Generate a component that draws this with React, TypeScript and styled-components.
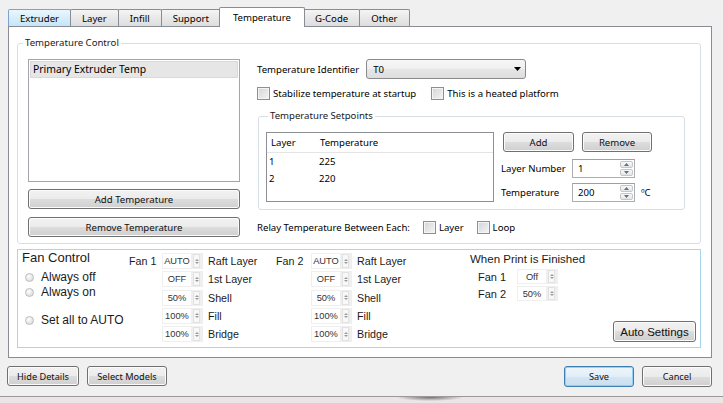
import { Fragment } from "react";
import styled, { createGlobalStyle } from "styled-components";

const GlobalStyle = createGlobalStyle`
  html, body {
    margin: 0;
    padding: 0;
    background: #f0f0f0;
  }
  * {
    box-sizing: border-box;
  }
`;

const uiFont = `"Noto Sans", "Open Sans", sans-serif`;
const arialFont = `"Liberation Sans", Arial, sans-serif`;

const Window = styled.div`
  width: 723px;
  height: 403px;
  overflow: hidden;
  background: #f0f0f0;
  font-family: ${uiFont};
  font-size: 9.6px;
  color: #000;
  display: flex;
  flex-direction: column;
`;

const TabBar = styled.div`
  display: flex;
  align-items: flex-end;
  height: 19px;
  margin: 7px 0 0 8px;
  position: relative;
  z-index: 1;
`;

const Tab = styled.div<{ $active?: boolean; $hot?: boolean }>`
  height: ${(p) => (p.$active ? 20 : 17)}px;
  margin-bottom: ${(p) => (p.$active ? -1 : 0)}px;
  margin-left: ${(p) => (p.$active ? -2 : -1)}px;
  margin-right: ${(p) => (p.$active ? -1 : 0)}px;
  padding: 0 ${(p) => (p.$active ? 13 : 11)}px;
  display: flex;
  align-items: center;
  border: 1px solid ${(p) => (p.$hot ? "#7da2ce" : "#898c95")};
  border-bottom: none;
  border-radius: 2px 2px 0 0;
  position: relative;
  z-index: ${(p) => (p.$active ? 2 : 0)};
  background: ${(p) =>
    p.$active
      ? "#fff"
      : p.$hot
      ? "linear-gradient(#eaf6fd, #d7eefb 50%, #c4e5f8)"
      : "linear-gradient(#f5f5f5, #e8e8e8 50%, #dedede)"};
  &:first-child {
    margin-left: 0;
  }
`;

const Panel = styled.div`
  margin-left: 8px;
  width: 704px;
  height: 332px;
  background: #fff;
  border: 1px solid #898c95;
  padding: 10px 10px 0 8px;
  display: flex;
  flex-direction: column;
`;

const Group = styled.fieldset<{ $pad: string }>`
  margin: 0;
  min-width: 0;
  border: 1px solid #d5dfe5;
  border-radius: 3px;
  padding: ${(p) => p.$pad};
`;

const SetpointGroup = styled(Group)`
  margin: 10px 0 0 1px;
`;

const Legend = styled.legend<{ $indent: number }>`
  padding: 0 2px;
  margin-left: ${(p) => p.$indent}px;
  line-height: 12px;
  font-size: 9.6px;
  color: #1a1a1a;
`;

const GroupBody = styled.div`
  display: flex;
  align-items: flex-start;
  gap: 17px;
`;

const LeftColumn = styled.div`
  width: 212px;
  display: flex;
  flex-direction: column;
`;

const ListBox = styled.div`
  height: 123px;
  border: 1px solid #a3a6ad;
  background: #fff;
  padding: 1px;
`;

const ListItem = styled.div<{ $selected?: boolean }>`
  height: 17px;
  line-height: 15px;
  padding-left: 2px;
  font-size: 10.4px;
  background: ${(p) => (p.$selected ? "#e6e6e6" : "transparent")};
  border: 1px solid ${(p) => (p.$selected ? "#d9d9d9" : "transparent")};
`;

const Button = styled.button<{ $w?: number; $h?: number; $mt?: number; $primary?: boolean; $font?: string; $size?: number }>`
  width: ${(p) => (p.$w ? `${p.$w}px` : "100%")};
  height: ${(p) => p.$h ?? 20}px;
  margin-top: ${(p) => p.$mt ?? 0}px;
  padding: 0;
  font-family: ${(p) => p.$font ?? uiFont};
  font-size: ${(p) => p.$size ?? 9.6}px;
  color: #111;
  border: 1px solid ${(p) => (p.$primary ? "#3c7fb1" : "#707070")};
  border-radius: 3px;
  box-shadow: inset 0 0 0 1px ${(p) => (p.$primary ? "#8ed2f6" : "#fbfbfb")};
  background: ${(p) =>
    p.$primary
      ? "linear-gradient(#eef5fa, #e2eef7 50%, #d5e6f2 50%, #c9def0)"
      : "linear-gradient(#f2f2f2, #ebebeb 50%, #dddddd 50%, #cfcfcf)"};
  flex-shrink: 0;
`;

const RightColumn = styled.div`
  flex: 1;
  display: flex;
  flex-direction: column;
`;

const Row = styled.div<{ $gap: number; $mt?: number; $h?: number; $pl?: number }>`
  display: flex;
  align-items: center;
  gap: ${(p) => p.$gap}px;
  margin-top: ${(p) => p.$mt ?? 0}px;
  padding-left: ${(p) => p.$pl ?? 0}px;
  height: ${(p) => (p.$h ? `${p.$h}px` : "auto")};
`;

const Combo = styled.div`
  width: 160px;
  height: 20px;
  border: 1px solid #8a8a8a;
  border-radius: 3px;
  background: linear-gradient(#f7f7f7, #efefef 50%, #e6e6e6 50%, #dedede);
  display: flex;
  align-items: center;
  justify-content: space-between;
  padding: 0 4px 0 6px;
`;

const CheckLabel = styled.label`
  display: flex;
  align-items: center;
  gap: 3px;
`;

const CheckBox = styled.span`
  width: 13px;
  height: 13px;
  border: 1px solid #8e8f8f;
  background: linear-gradient(135deg, #d2d5d9, #f4f4f4);
  box-shadow: inset 0 0 0 1px #f4f4f4;
`;

const SetpointBody = styled.div`
  display: flex;
  gap: 7px;
`;

const Table = styled.div`
  width: 228px;
  height: 70px;
  border: 1px solid #8c8f96;
  background: #fff;
`;

const TableHead = styled.div`
  display: flex;
  align-items: center;
  height: 20px;
  border-bottom: 1px solid #e5e5e5;
`;

const TableRow = styled.div`
  display: flex;
  align-items: center;
  height: 17px;
`;

const Cell = styled.span<{ $w?: number; $pad: number }>`
  width: ${(p) => (p.$w ? `${p.$w}px` : "auto")};
  padding-left: ${(p) => p.$pad}px;
`;

const SideControls = styled.div`
  display: flex;
  flex-direction: column;
`;

const FieldLabel = styled.span<{ $w: number }>`
  width: ${(p) => p.$w}px;
`;

const Unit = styled.span`
  margin-left: 6px;
`;

const SpinBox = styled.div`
  width: 63px;
  height: 19px;
  display: flex;
  border: 1px solid #abadb3;
  border-top-color: #9da0a7;
  background: #fff;
`;

const SpinText = styled.span`
  flex: 1;
  padding-left: 5px;
  line-height: 18px;
`;

const SpinButtons = styled.div`
  width: 14px;
  display: flex;
  flex-direction: column;
  gap: 1px;
  padding: 1px 1px 1px 0;
`;

const SpinButton = styled.span`
  flex: 1;
  border: 1px solid #c3c6cb;
  border-radius: 2px;
  background: linear-gradient(#f8f8f8, #e6e6e6);
  display: flex;
  align-items: center;
  justify-content: center;
`;

const FanPanel = styled.div`
  margin-top: 5px;
  height: 99px;
  border: 1px solid #a9d6ef;
  display: flex;
  padding: 0 4px 5px 4px;
  font-family: ${arialFont};
  color: #1a1a1a;
`;

const RadioColumn = styled.div`
  width: 107px;
  display: flex;
  flex-direction: column;
`;

const FanTitle = styled.div`
  font-size: 13px;
  line-height: 15px;
`;

const RadioRow = styled.label<{ $mt: number }>`
  display: flex;
  align-items: center;
  gap: 7px;
  height: 15px;
  margin-top: ${(p) => p.$mt}px;
  padding-left: 3px;
  font-size: 12px;
`;

const RadioDot = styled.span`
  width: 9px;
  height: 9px;
  border-radius: 50%;
  border: 1px solid #bcbcbc;
  background: radial-gradient(circle at 40% 35%, #ffffff, #d3d3d3);
`;

const FanGrid = styled.div<{ $w: number; $labelW: number }>`
  width: ${(p) => p.$w}px;
  margin-top: 3px;
  display: grid;
  grid-template-columns: ${(p) => p.$labelW}px 41px auto;
  grid-auto-rows: 16px;
  column-gap: 5px;
  row-gap: 2.25px;
  align-items: center;
  align-content: start;
  font-size: 10.7px;
`;

const FanSpin = styled.div<{ $h?: number; $w?: number }>`
  width: ${(p) => (p.$w ? `${p.$w}px` : "auto")};
  height: ${(p) => p.$h ?? 16}px;
  display: flex;
  gap: 2px;
  background: #efefef;
  padding: 1px 3px 1px 1px;
`;

const FanValue = styled.span`
  flex: 1;
  background: #fff;
  display: flex;
  align-items: center;
  justify-content: center;
  font-size: 9.3px;
  color: #333;
`;

const FanArrows = styled.span`
  width: 7px;
  display: flex;
  flex-direction: column;
  align-items: center;
  justify-content: center;
  gap: 1px;
  background: #f8f8f8;
  border: 1px solid #e2e2e2;
`;

const FinishColumn = styled.div`
  flex: 1;
  display: flex;
  flex-direction: column;
`;

const FinishTitle = styled.div`
  margin-top: 2px;
  font-size: 11.5px;
  line-height: 14px;
`;

const FinishRow = styled.div<{ $mt: number }>`
  display: flex;
  align-items: center;
  height: 15px;
  margin-top: ${(p) => p.$mt}px;
  padding-left: 8px;
  font-size: 11px;
`;

const AutoWrap = styled.div`
  margin-top: auto;
  align-self: flex-end;
`;

const Footer = styled.div`
  height: 38px;
  display: flex;
  align-items: flex-start;
  gap: 8px;
  padding: 8px 11px 0 7px;
`;

const Spacer = styled.div`
  flex: 1;
`;

const BottomEdge = styled.div`
  height: 7px;
  border-top: 1px solid #9c9898;
  background:
    radial-gradient(ellipse 34px 4px at 430px 0px, #6f6c6c, rgba(111, 108, 108, 0) 100%),
    #ebe5e5;
`;

const Triangle = ({ up, color, w = 5, h = 3 }: { up?: boolean; color: string; w?: number; h?: number }) => (
  <svg width={w} height={h} viewBox={`0 0 ${w} ${h}`}>
    <path d={up ? `M0 ${h} L${w / 2} 0 L${w} ${h} Z` : `M0 0 L${w} 0 L${w / 2} ${h} Z`} fill={color} />
  </svg>
);

const Spinner = ({ value }: { value: string }) => (
  <SpinBox>
    <SpinText>{value}</SpinText>
    <SpinButtons>
      <SpinButton>
        <Triangle up color="#56709a" />
      </SpinButton>
      <SpinButton>
        <Triangle color="#56709a" />
      </SpinButton>
    </SpinButtons>
  </SpinBox>
);

const SmallSpin = ({ value, h, w }: { value: string; h?: number; w?: number }) => (
  <FanSpin $h={h} $w={w}>
    <FanValue>{value}</FanValue>
    <FanArrows>
      <Triangle up color="#9a9a9a" w={4} h={2} />
      <Triangle color="#9a9a9a" w={4} h={2} />
    </FanArrows>
  </FanSpin>
);

const fanRows = [
  { label: "Raft Layer", value: "AUTO" },
  { label: "1st Layer", value: "OFF" },
  { label: "Shell", value: "50%" },
  { label: "Fill", value: "100%" },
  { label: "Bridge", value: "100%" },
];

const FanBlock = ({ name, width, labelWidth }: { name: string; width: number; labelWidth: number }) => (
  <FanGrid $w={width} $labelW={labelWidth}>
    {fanRows.map((r, i) => (
      <Fragment key={r.label}>
        <span>{i === 0 ? name : ""}</span>
        <SmallSpin value={r.value} />
        <span>{r.label}</span>
      </Fragment>
    ))}
  </FanGrid>
);

const tabs = ["Extruder", "Layer", "Infill", "Support", "Temperature", "G-Code", "Other"];

export default function App() {
  return (
    <Window>
      <GlobalStyle />
      <TabBar>
        {tabs.map((t) => (
          <Tab key={t} $active={t === "Temperature"} $hot={t === "Extruder"}>
            {t}
          </Tab>
        ))}
      </TabBar>
      <Panel>
        <Group $pad="10px 15px 6px 10px">
          <Legend $indent={-5}>Temperature Control</Legend>
          <GroupBody>
            <LeftColumn>
              <ListBox>
                <ListItem $selected>Primary Extruder Temp</ListItem>
              </ListBox>
              <Button $mt={7}>Add Temperature</Button>
              <Button $mt={8}>Remove Temperature</Button>
            </LeftColumn>
            <RightColumn>
              <Row $gap={7} $h={20}>
                <span>Temperature Identifier</span>
                <Combo>
                  <span>T0</span>
                  <Triangle color="#000" w={7} h={4} />
                </Combo>
              </Row>
              <Row $gap={15} $mt={7} $h={14}>
                <CheckLabel>
                  <CheckBox />
                  Stabilize temperature at startup
                </CheckLabel>
                <CheckLabel>
                  <CheckBox />
                  This is a heated platform
                </CheckLabel>
              </Row>
              <SetpointGroup $pad="10px 7px 7px 7px">
                <Legend $indent={2}>Temperature Setpoints</Legend>
                <SetpointBody>
                  <Table>
                    <TableHead>
                      <Cell $w={52} $pad={4}>Layer</Cell>
                      <Cell $pad={1}>Temperature</Cell>
                    </TableHead>
                    <TableRow>
                      <Cell $w={52} $pad={2}>1</Cell>
                      <Cell $pad={0}>225</Cell>
                    </TableRow>
                    <TableRow>
                      <Cell $w={52} $pad={2}>2</Cell>
                      <Cell $pad={0}>220</Cell>
                    </TableRow>
                  </Table>
                  <SideControls>
                    <Row $gap={8} $pl={2}>
                      <Button $w={71}>Add</Button>
                      <Button $w={70}>Remove</Button>
                    </Row>
                    <Row $gap={0} $mt={7}>
                      <FieldLabel $w={71}>Layer Number</FieldLabel>
                      <Spinner value="1" />
                    </Row>
                    <Row $gap={0} $mt={5}>
                      <FieldLabel $w={71}>Temperature</FieldLabel>
                      <Spinner value="200" />
                      <Unit>ºC</Unit>
                    </Row>
                  </SideControls>
                </SetpointBody>
              </SetpointGroup>
              <Row $gap={13} $mt={10} $h={14}>
                <span>Relay Temperature Between Each:</span>
                <CheckLabel>
                  <CheckBox />
                  Layer
                </CheckLabel>
                <CheckLabel>
                  <CheckBox />
                  Loop
                </CheckLabel>
              </Row>
            </RightColumn>
          </GroupBody>
        </Group>

        <FanPanel>
          <RadioColumn>
            <FanTitle>Fan Control</FanTitle>
            <RadioRow $mt={4.5}>
              <RadioDot />
              Always off
            </RadioRow>
            <RadioRow $mt={0}>
              <RadioDot />
              Always on
            </RadioRow>
            <RadioRow $mt={13}>
              <RadioDot />
              Set all to AUTO
            </RadioRow>
          </RadioColumn>
          <FanBlock name="Fan 1" width={147} labelWidth={28} />
          <FanBlock name="Fan 2" width={194} labelWidth={30} />
          <FinishColumn>
            <FinishTitle>When Print is Finished</FinishTitle>
            <FinishRow $mt={3}>
              <FieldLabel $w={39}>Fan 1</FieldLabel>
              <SmallSpin value="Off" h={15} w={41} />
            </FinishRow>
            <FinishRow $mt={2}>
              <FieldLabel $w={39}>Fan 2</FieldLabel>
              <SmallSpin value="50%" h={15} w={41} />
            </FinishRow>
            <AutoWrap>
              <Button $w={83} $h={21} $font={arialFont} $size={11.5}>
                Auto Settings
              </Button>
            </AutoWrap>
          </FinishColumn>
        </FanPanel>
      </Panel>

      <Footer>
        <Button $w={72} $size={9.2}>Hide Details</Button>
        <Button $w={80} $size={9.2}>Select Models</Button>
        <Spacer />
        <Button $w={70} $h={21} $primary $size={9.2}>Save</Button>
        <Button $w={70} $h={21} $size={9.2}>Cancel</Button>
      </Footer>
      <BottomEdge />
    </Window>
  );
}
